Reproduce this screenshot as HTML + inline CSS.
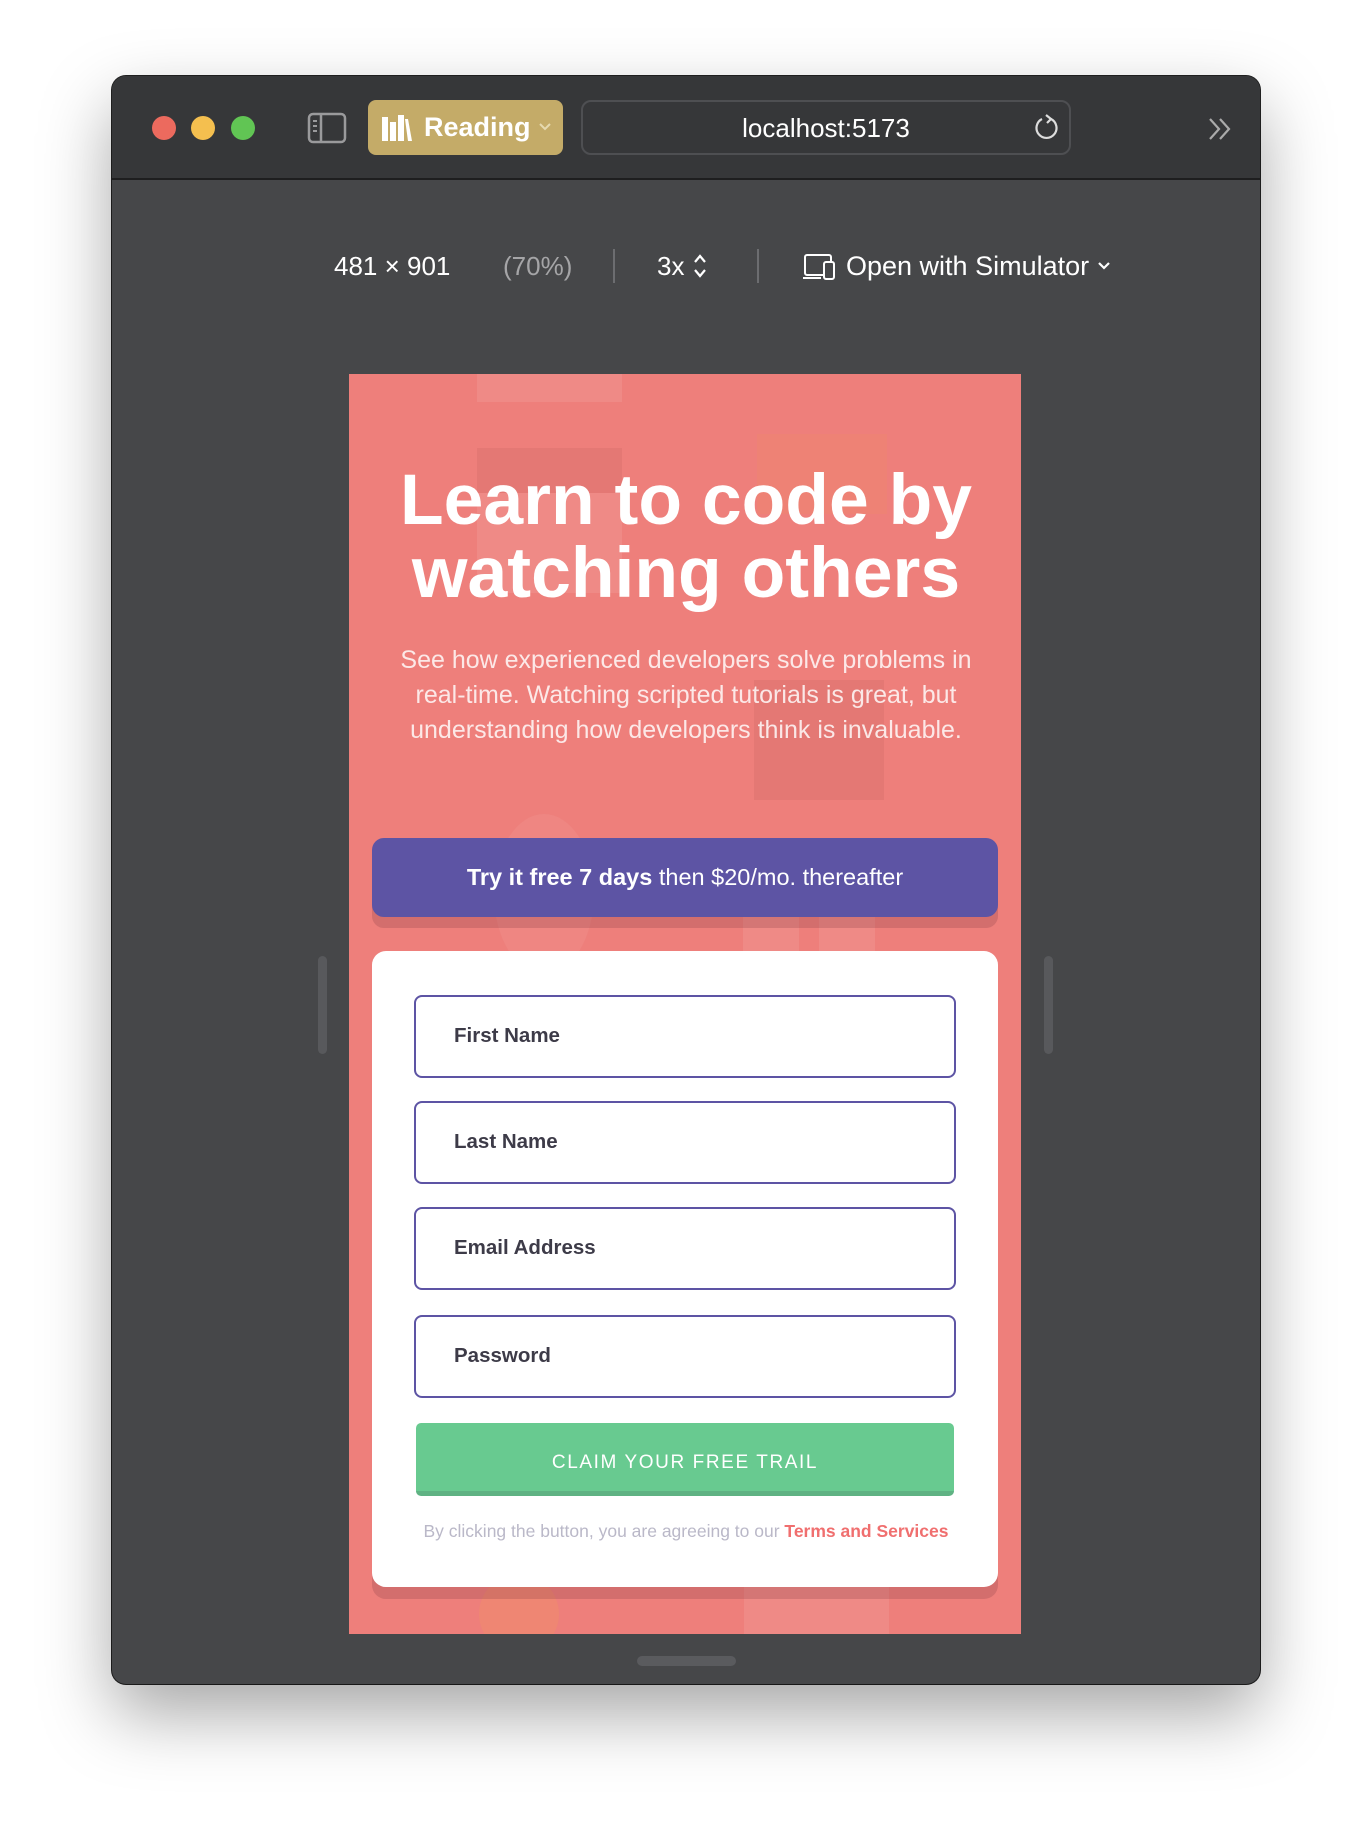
<!DOCTYPE html>
<html><head><meta charset="utf-8"><style>
*{margin:0;padding:0;box-sizing:border-box}
body{width:1372px;height:1832px;background:#fff;font-family:"Liberation Sans",sans-serif;position:relative;overflow:hidden}
.win{position:absolute;left:112px;top:76px;width:1148px;height:1608px;border-radius:14px;background:#464749;box-shadow:0 30px 70px rgba(0,0,0,.35),0 0 0 1px #222;overflow:hidden}
.bar{position:absolute;left:0;top:0;width:100%;height:104px;background:#363739;border-bottom:2px solid #1e1e1f}
.dot{position:absolute;top:116px;width:24px;height:24px;border-radius:50%}
.abs{position:absolute}
.tb{position:absolute;top:248px;color:#fff;font-size:26px;line-height:36px}
.phone{position:absolute;left:349px;top:374px;width:672px;height:1260px;background:#ee7f7b;overflow:hidden}
.sh{position:absolute;background:rgba(255,255,255,.09)}
.dk{position:absolute;background:rgba(150,60,60,.1)}
h1{position:absolute;left:0;top:464px;width:1372px;text-align:center;color:#fff;font-size:71.5px;line-height:73px;font-weight:bold;letter-spacing:0}
.p{position:absolute;left:0;top:643px;width:1372px;text-align:center;color:rgba(255,255,255,.82);font-size:25px;line-height:35px}
.banner{position:absolute;left:372px;top:838px;width:626px;height:79px;background:#5d54a4;border-radius:12px;box-shadow:0 11px 0 rgba(120,50,60,.22);color:#fff;text-align:center;font-size:23.5px;line-height:79px}
.card{position:absolute;left:372px;top:951px;width:626px;height:636px;background:#fff;border-radius:14px;box-shadow:0 12px 0 rgba(120,50,60,.22)}
.in{position:absolute;left:414px;width:542px;height:83px;border:2.5px solid #5d54a4;border-radius:8px;padding-left:38px;font-weight:bold;font-size:20.5px;color:#3d3b48;line-height:78px}
.btn{position:absolute;left:416px;top:1423px;width:538px;height:73px;background:#68ca90;border-radius:5px;border-bottom:5px solid #5fb283;color:#fff;text-align:center;font-size:19px;letter-spacing:1.6px;line-height:80px}
.terms{position:absolute;left:0;top:1521px;width:1372px;text-align:center;font-size:17.5px;color:#bab8c8}
.terms b{color:#f06f6f}
</style></head><body>
<div class="win">
 <div class="bar"></div>
</div>
<div class="dot" style="left:152px;background:#ec6a5e"></div>
<div class="dot" style="left:191px;background:#f4bf4f"></div>
<div class="dot" style="left:231px;background:#61c554"></div>
<svg class="abs" style="left:307px;top:112px" width="40" height="32" viewBox="0 0 40 32"><rect x="2" y="2" width="36" height="28" rx="4" fill="none" stroke="#9a9a9c" stroke-width="2.5"/><line x1="14" y1="2" x2="14" y2="30" stroke="#9a9a9c" stroke-width="2.5"/><line x1="6" y1="9" x2="10" y2="9" stroke="#9a9a9c" stroke-width="2"/><line x1="6" y1="14" x2="10" y2="14" stroke="#9a9a9c" stroke-width="2"/><line x1="6" y1="19" x2="10" y2="19" stroke="#9a9a9c" stroke-width="2"/></svg>
<div class="abs" style="left:368px;top:100px;width:195px;height:55px;background:#c4ab68;border-radius:8px"></div>
<svg class="abs" style="left:381px;top:114px" width="32" height="28" viewBox="0 0 32 28"><rect x="1" y="3" width="6" height="24" fill="#fff"/><rect x="9" y="8" width="6" height="19" fill="#fff"/><rect x="17" y="1" width="6" height="26" fill="#fff"/><path d="M24 5 L27 5 L31 27 L27 27Z" fill="#fff"/></svg>
<div class="abs" style="left:424px;top:109px;color:#fff;font-size:27px;font-weight:bold;line-height:36px">Reading</div>
<svg class="abs" style="left:538px;top:122px" width="14" height="10" viewBox="0 0 14 10"><path d="M2 2 L7 7 L12 2" fill="none" stroke="#e6d9b0" stroke-width="2"/></svg>
<div class="abs" style="left:581px;top:100px;width:490px;height:55px;border:2px solid #4e4f52;border-radius:10px"></div>
<div class="abs" style="left:581px;top:110px;width:490px;text-align:center;color:#fff;font-size:26px;line-height:36px">localhost:5173</div>
<svg class="abs" style="left:1033px;top:113px" width="28" height="30" viewBox="0 0 28 30"><path d="M18 6 A10 10 0 1 1 9 6" fill="none" stroke="#ddd" stroke-width="2.2"/><path d="M13 2 L18 6 L14 10" fill="none" stroke="#ddd" stroke-width="2.2"/></svg>
<svg class="abs" style="left:1207px;top:116px" width="28" height="26" viewBox="0 0 28 26"><path d="M3 3 L12 13 L3 23 M13 3 L22 13 L13 23" fill="none" stroke="#aaa" stroke-width="2.2"/></svg>
<div class="tb" style="left:334px">481 × 901</div>
<div class="tb" style="left:503px;color:#a5a5a7">(70%)</div>
<div class="abs" style="left:613px;top:249px;width:2px;height:34px;background:#6c6d70"></div>
<div class="tb" style="left:657px">3x</div>
<svg class="abs" style="left:693px;top:253px" width="14" height="26" viewBox="0 0 14 26"><path d="M2 9 L7 3 L12 9 M2 17 L7 23 L12 17" fill="none" stroke="#fff" stroke-width="2.2"/></svg>
<div class="abs" style="left:757px;top:249px;width:2px;height:34px;background:#6c6d70"></div>
<svg class="abs" style="left:803px;top:253px" width="34" height="28" viewBox="0 0 34 28"><rect x="2" y="2" width="26" height="20" rx="2" fill="none" stroke="#fff" stroke-width="2"/><line x1="0" y1="25" x2="18" y2="25" stroke="#fff" stroke-width="2"/><rect x="21" y="9" width="10" height="17" rx="2" fill="#464749" stroke="#fff" stroke-width="2"/></svg>
<div class="tb" style="left:846px;font-size:27px">Open with Simulator</div>
<svg class="abs" style="left:1096px;top:260px" width="16" height="12" viewBox="0 0 16 12"><path d="M3 3 L8 8 L13 3" fill="none" stroke="#fff" stroke-width="2.2"/></svg>
<div class="abs" style="left:318px;top:956px;width:9px;height:98px;border-radius:5px;background:#58595c"></div>
<div class="abs" style="left:1044px;top:956px;width:9px;height:98px;border-radius:5px;background:#58595c"></div>
<div class="abs" style="left:637px;top:1656px;width:99px;height:10px;border-radius:5px;background:#5a5b5e"></div>
<div class="phone">
 <div class="sh" style="left:128px;top:0;width:145px;height:28px"></div>
 <div class="dk" style="left:128px;top:74px;width:145px;height:45px"></div>
 <div class="sh" style="left:128px;top:119px;width:145px;height:100px"></div>
 <div class="sh" style="left:408px;top:60px;width:130px;height:80px;background:rgba(240,140,100,.25)"></div>
 <div class="dk" style="left:405px;top:306px;width:130px;height:120px"></div>
 <div class="sh" style="left:394px;top:470px;width:56px;height:170px"></div>
 <div class="sh" style="left:470px;top:540px;width:56px;height:100px"></div>
 <div class="sh" style="left:145px;top:440px;width:100px;height:160px;border-radius:50%;background:rgba(255,255,255,.06)"></div>
 <div class="sh" style="left:395px;top:1132px;width:145px;height:128px"></div>
 <div class="sh" style="left:130px;top:1200px;width:80px;height:80px;border-radius:50%;background:rgba(240,150,100,.35)"></div>
</div>
<h1>Learn to code by<br>watching others</h1>
<div class="p">See how experienced developers solve problems in<br>real-time. Watching scripted tutorials is great, but<br>understanding how developers think is invaluable.</div>
<div class="banner"><b>Try it free 7 days</b> then $20/mo. thereafter</div>
<div class="card"></div>
<div class="in" style="top:995px">First Name</div>
<div class="in" style="top:1101px">Last Name</div>
<div class="in" style="top:1207px">Email Address</div>
<div class="in" style="top:1315px">Password</div>
<div class="btn">CLAIM YOUR FREE TRAIL</div>
<div class="terms">By clicking the button, you are agreeing to our <b>Terms and Services</b></div>
</body></html>
